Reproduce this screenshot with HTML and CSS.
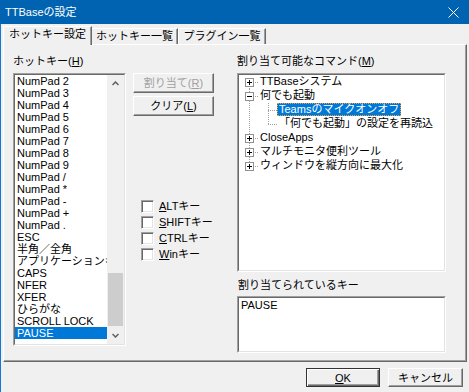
FILE: index.html
```html
<!DOCTYPE html>
<html lang="ja">
<head>
  <meta charset="UTF-8" />
  <title>TTBaseの設定</title>
  <link rel="stylesheet" href="styles.css">
</head>
<body>
  <div class="window">
    <div class="titlebar">
      <span class="title">TTBaseの設定</span>
      <svg class="close" width="11" height="11" viewBox="0 0 11 11">
        <path d="M0.5 0.5L10.5 10.5M10.5 0.5L0.5 10.5" stroke="#fff" stroke-width="1" fill="none"/>
      </svg>
    </div>

    <div class="tabs">
      <div class="tab active">ホットキー設定</div>
      <div class="tab tab2">ホットキー一覧</div>
      <div class="tab tab3">プラグイン一覧</div>
    </div>

    <div class="panel">
      <div class="col-left">
        <div class="label">ホットキー(<u>H</u>)</div>
        <div class="sunken listbox">
          <div class="sunken-in list-in">
            <ul class="items">
              <li>NumPad 2</li>
              <li>NumPad 3</li>
              <li>NumPad 4</li>
              <li>NumPad 5</li>
              <li>NumPad 6</li>
              <li>NumPad 7</li>
              <li>NumPad 8</li>
              <li>NumPad 9</li>
              <li>NumPad /</li>
              <li>NumPad *</li>
              <li>NumPad -</li>
              <li>NumPad +</li>
              <li>NumPad .</li>
              <li>ESC</li>
              <li>半角／全角</li>
              <li>アプリケーションキー</li>
              <li>CAPS</li>
              <li>NFER</li>
              <li>XFER</li>
              <li>ひらがな</li>
              <li>SCROLL LOCK</li>
              <li class="selected">PAUSE</li>
            </ul>
            <div class="scrollbar">
              <div class="arrow">
                <svg width="7" height="5" viewBox="0 0 7 5"><path d="M0.5 4L3.5 1L6.5 4" stroke="#606060" stroke-width="1.5" fill="none"/></svg>
              </div>
              <div class="track"><div class="thumb"></div></div>
              <div class="arrow">
                <svg width="7" height="5" viewBox="0 0 7 5"><path d="M0.5 1L3.5 4L6.5 1" stroke="#606060" stroke-width="1.5" fill="none"/></svg>
              </div>
            </div>
          </div>
        </div>
      </div>

      <div class="col-mid">
        <button class="btn side" disabled>割り当て(<u>R</u>)</button>
        <button class="btn side">クリア(<u>L</u>)</button>
        <div class="checks">
          <label class="check"><span class="box"></span><span><u>A</u>LTキー</span></label>
          <label class="check"><span class="box"></span><span><u>S</u>HIFTキー</span></label>
          <label class="check"><span class="box"></span><span><u>C</u>TRLキー</span></label>
          <label class="check"><span class="box"></span><span><u>W</u>inキー</span></label>
        </div>
      </div>

      <div class="col-right">
        <div class="label">割り当て可能なコマンド(<u>M</u>)</div>
        <div class="sunken tree">
          <div class="sunken-in tree-in">
            <div class="node root first">
              <span class="branch"><svg class="expander" width="9" height="9" viewBox="0 0 9 9"><rect x="0.5" y="0.5" width="8" height="8" fill="#fff" stroke="#919191"/><path d="M2 4.5H7M4.5 2V7" stroke="#000"/></svg></span>
              <span class="text">TTBaseシステム</span>
            </div>
            <div class="node root">
              <span class="branch"><svg class="expander" width="9" height="9" viewBox="0 0 9 9"><rect x="0.5" y="0.5" width="8" height="8" fill="#fff" stroke="#919191"/><path d="M2 4.5H7" stroke="#000"/></svg></span>
              <span class="text">何でも起動</span>
            </div>
            <div class="node child">
              <span class="branch pass"></span>
              <span class="branch sub"></span>
              <span class="text selected">Teamsのマイクオンオフ</span>
            </div>
            <div class="node child">
              <span class="branch pass"></span>
              <span class="branch sub last"></span>
              <span class="text">「何でも起動」の設定を再読込</span>
            </div>
            <div class="node root">
              <span class="branch"><svg class="expander" width="9" height="9" viewBox="0 0 9 9"><rect x="0.5" y="0.5" width="8" height="8" fill="#fff" stroke="#919191"/><path d="M2 4.5H7M4.5 2V7" stroke="#000"/></svg></span>
              <span class="text">CloseApps</span>
            </div>
            <div class="node root">
              <span class="branch"><svg class="expander" width="9" height="9" viewBox="0 0 9 9"><rect x="0.5" y="0.5" width="8" height="8" fill="#fff" stroke="#919191"/><path d="M2 4.5H7M4.5 2V7" stroke="#000"/></svg></span>
              <span class="text">マルチモニタ便利ツール</span>
            </div>
            <div class="node root last">
              <span class="branch"><svg class="expander" width="9" height="9" viewBox="0 0 9 9"><rect x="0.5" y="0.5" width="8" height="8" fill="#fff" stroke="#919191"/><path d="M2 4.5H7M4.5 2V7" stroke="#000"/></svg></span>
              <span class="text">ウィンドウを縦方向に最大化</span>
            </div>
          </div>
        </div>
        <div class="label label2">割り当てられているキー</div>
        <div class="sunken keys">
          <div class="sunken-in keys-in">PAUSE</div>
        </div>
      </div>
    </div>

    <div class="footer">
      <button class="btn default"><u>O</u>K</button>
      <button class="btn cancel">キャンセル</button>
    </div>
  </div>
</body>
</html>
```

FILE: styles.css
```css
* {
  margin: 0;
  padding: 0;
  box-sizing: border-box;
}

body {
  background: #f0f0f0;
  font-family: "Liberation Sans", "Noto Sans CJK JP", sans-serif;
  font-size: 11px;
  color: #000;
}

u {
  text-underline-offset: 1px;
}

.window {
  width: 469px;
  height: 392px;
  background: #f0f0f0;
  border-left: 1px solid #1479d2;
}

.titlebar {
  height: 24px;
  background: #0063b1;
  color: #fff;
  display: flex;
  align-items: center;
  justify-content: space-between;
  margin-left: -1px;
  padding: 0 10px 0 5px;
}

.title {
  font-size: 11px;
  line-height: 12px;
}

/* tabs */
.tabs {
  display: flex;
  align-items: flex-end;
  height: 21px;
  margin-bottom: -1px;
  padding-left: 2px;
}

.tab {
  height: 16px;
  margin-bottom: 1px;
  border-top: 1px solid #fff;
  border-left: 1px solid #fff;
  border-right: 1px solid #696969;
  box-shadow: inset -1px 0 #a0a0a0;
  text-align: center;
  line-height: 14px;
  white-space: nowrap;
}

.tab.active {
  position: relative;
  z-index: 1;
  height: 19px;
  margin-bottom: 0;
  width: 89px;
  background: #f0f0f0;
  line-height: 15px;
}

.tab2 {
  width: 86px;
  border-left: none;
}

.tab3 {
  width: 88px;
}

/* panel */
.panel {
  margin: 0 2px;
  height: 318px;
  border: 1px solid;
  border-color: #fff #696969 #696969 #fff;
  box-shadow: inset -1px -1px #a0a0a0;
  display: flex;
  padding: 8px 0 0 9px;
}

.label {
  height: 16px;
  line-height: 16px;
  margin-bottom: 4px;
  white-space: nowrap;
}

.label2 {
  margin-top: 5px;
  margin-bottom: 3px;
  padding-left: 1px;
}

.sunken {
  border: 1px solid;
  border-color: #a0a0a0 #fff #fff #a0a0a0;
}

.sunken-in {
  height: 100%;
  border: 1px solid;
  border-color: #696969 #e3e3e3 #e3e3e3 #696969;
  background: #fff;
}

/* hotkey list */
.col-left {
  width: 113px;
}

.listbox {
  height: 273px;
}

.list-in {
  display: flex;
}

.items {
  list-style: none;
  flex: 1;
  overflow: hidden;
}

.items li {
  height: 12px;
  line-height: 12px;
  padding-left: 2px;
  white-space: nowrap;
}

.items li.selected {
  background: #0078d7;
  color: #fff;
}

.scrollbar {
  width: 17px;
  background: #f0f0f0;
  display: flex;
  flex-direction: column;
}

.arrow {
  height: 17px;
  display: flex;
  align-items: center;
  justify-content: center;
}

.track {
  flex: 1;
  display: flex;
  flex-direction: column;
  justify-content: flex-end;
  padding: 0 1px 1px;
}

.thumb {
  height: 53px;
  background: #cdcdcd;
}

/* middle buttons */
.col-mid {
  width: 81px;
  margin-left: 7px;
  padding-top: 20px;
}

.btn {
  font: inherit;
  color: #000;
  background: #f0f0f0;
  border: 1px solid;
  border-color: #fff #696969 #696969 #fff;
  box-shadow: inset -1px -1px #a0a0a0;
  height: 20px;
  display: block;
  text-align: center;
  line-height: 17px;
  white-space: nowrap;
}

.btn.side {
  width: 81px;
  margin-bottom: 3px;
}

.btn:disabled {
  color: #a0a0a0;
}

.checks {
  margin-top: 84px;
  margin-left: 8px;
  display: flex;
  flex-direction: column;
  gap: 3px;
}

.check {
  display: flex;
  align-items: center;
  height: 13px;
  line-height: 13px;
  gap: 5px;
  white-space: nowrap;
}

.box {
  width: 13px;
  height: 13px;
  background: #fff;
  border: 1px solid;
  border-color: #a0a0a0 #fff #fff #a0a0a0;
  box-shadow: inset 1px 1px #696969, inset -1px -1px #e3e3e3;
}

/* command tree */
.col-right {
  width: 209px;
  margin-left: 23px;
}

.tree {
  height: 199px;
}

.tree-in {
  overflow: hidden;
}

.node {
  display: flex;
  align-items: flex-start;
  height: 14px;
  white-space: nowrap;
}

.branch {
  width: 19px;
  height: 14px;
  flex: none;
  padding: 3px 0 0 6px;
}

.expander {
  display: block;
}

.root .branch {
  background:
    repeating-linear-gradient(to right, #a0a0a0 0 1px, transparent 1px 2px) 14px 7px / 5px 1px no-repeat,
    repeating-linear-gradient(#a0a0a0 0 1px, transparent 1px 2px) 10px 0 / 1px 100% no-repeat;
}

.root.first .branch {
  background:
    repeating-linear-gradient(to right, #a0a0a0 0 1px, transparent 1px 2px) 14px 7px / 5px 1px no-repeat,
    repeating-linear-gradient(#a0a0a0 0 1px, transparent 1px 2px) 10px 7px / 1px 7px no-repeat;
}

.root.last .branch {
  background:
    repeating-linear-gradient(to right, #a0a0a0 0 1px, transparent 1px 2px) 14px 7px / 5px 1px no-repeat,
    repeating-linear-gradient(#a0a0a0 0 1px, transparent 1px 2px) 10px 0 / 1px 8px no-repeat;
}

.branch.pass {
  background: repeating-linear-gradient(#a0a0a0 0 1px, transparent 1px 2px) 10px 0 / 1px 100% no-repeat;
}

.branch.sub {
  background:
    repeating-linear-gradient(to right, #a0a0a0 0 1px, transparent 1px 2px) 10px 7px / 9px 1px no-repeat,
    repeating-linear-gradient(#a0a0a0 0 1px, transparent 1px 2px) 10px 0 / 1px 100% no-repeat;
}

.branch.sub.last {
  background:
    repeating-linear-gradient(to right, #a0a0a0 0 1px, transparent 1px 2px) 10px 7px / 9px 1px no-repeat,
    repeating-linear-gradient(#a0a0a0 0 1px, transparent 1px 2px) 10px 0 / 1px 8px no-repeat;
}

.text {
  height: 13px;
  line-height: 13px;
  padding: 0 2px;
}

.text.selected {
  background: #0078d7;
  color: #fff;
  outline: 1px dotted #f0a030;
  outline-offset: -1px;
}

/* assigned keys */
.keys {
  height: 57px;
}

.keys-in {
  padding: 1px 2px;
  line-height: 12px;
}

/* footer */
.footer {
  height: 30px;
  display: flex;
  justify-content: flex-end;
  align-items: flex-start;
  gap: 8px;
  padding: 6px 6px 0 0;
}

.footer .btn {
  height: 19px;
  line-height: 16px;
}

.btn.default {
  width: 74px;
  border-color: #333;
  box-shadow: inset 1px 1px #fff, inset -1px -1px #696969, inset -2px -2px #a0a0a0;
}

.btn.cancel {
  width: 75px;
}
```
